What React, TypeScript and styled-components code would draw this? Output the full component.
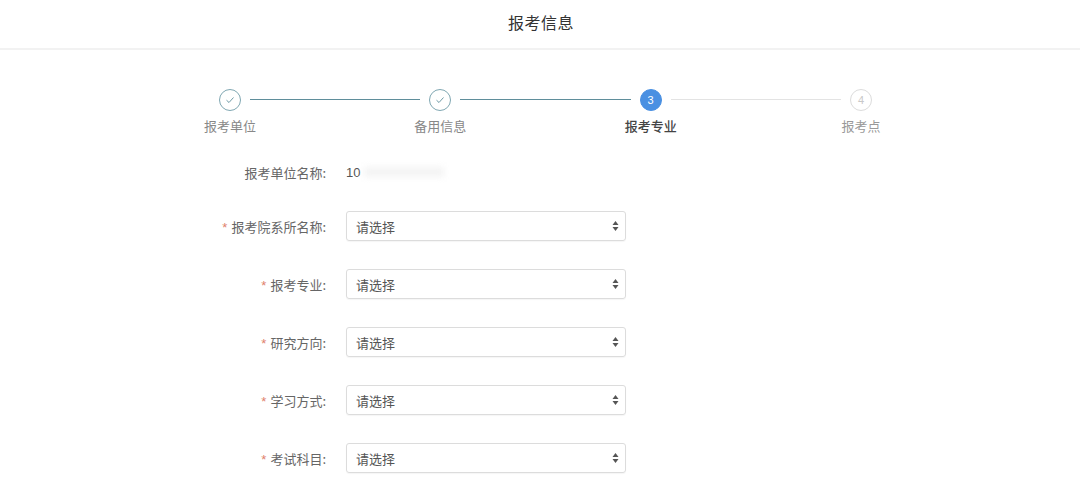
import React from "react";
import styled, { createGlobalStyle } from "styled-components";

const Global = createGlobalStyle`
  html, body { margin: 0; padding: 0; background: #ffffff; }
  body { font-family: "Noto Sans CJK SC", "Noto Sans", sans-serif; color: #333; }
`;

const Page = styled.div`
  width: 1080px;
  height: 487px;
  overflow: hidden;
  background: #fff;
`;

const Header = styled.header`
  height: 48px;
  border-bottom: 2px solid #f2f2f2;
  display: flex;
  align-items: center;
  justify-content: center;
`;

const Title = styled.h1`
  margin: 0 0 4px 2px;
  font-size: 16px;
  font-weight: 400;
  color: #333;
  letter-spacing: 0.5px;
`;

const Steps = styled.div`
  display: flex;
  align-items: flex-start;
  margin: 39px 0 0 219px;
  width: 653px;
`;

const StepItem = styled.div`
  width: 22px;
  display: flex;
  flex-direction: column;
  align-items: center;
`;

type State = "done" | "active" | "todo";

const Circle = styled.div<{ $state: State }>`
  width: 22px;
  height: 22px;
  box-sizing: border-box;
  border-radius: 50%;
  display: flex;
  align-items: center;
  justify-content: center;
  font-size: 11px;
  font-family: "Liberation Sans", sans-serif;
  border: 1px solid
    ${(p) => (p.$state === "done" ? "#7fa7b2" : p.$state === "active" ? "#4a90e2" : "#dcdcdc")};
  background: ${(p) => (p.$state === "active" ? "#4a90e2" : "#fff")};
  color: ${(p) => (p.$state === "active" ? "#fff" : "#c8c8c8")};
`;

const StepLabel = styled.div<{ $state: State }>`
  margin-top: 6px;
  white-space: nowrap;
  font-size: 13px;
  line-height: 18px;
  color: ${(p) => (p.$state === "active" ? "#444" : p.$state === "done" ? "#888" : "#999")};
  font-weight: ${(p) => (p.$state === "active" ? 500 : 400)};
`;

const Connector = styled.div<{ $done: boolean }>`
  flex: 1;
  height: 1px;
  margin: 10px 9px 0;
  background: ${(p) => (p.$done ? "#5f8e9b" : "#e3e3e3")};
`;

const Form = styled.div`
  margin-top: 22px;
  padding-left: 200px;
  display: flex;
  flex-direction: column;
  gap: 28px;
`;

const Row = styled.div<{ $tight?: boolean }>`
  display: flex;
  align-items: center;
  height: 30px;
  margin-bottom: ${(p) => (p.$tight ? "-4px" : "0")};
`;

const Label = styled.label`
  width: 126px;
  text-align: right;
  font-size: 13px;
  color: #666;
  white-space: nowrap;
  margin-right: 20px;
`;

const Star = styled.span`
  color: #e0806c;
  margin-right: 4px;
  font-family: "Liberation Sans", sans-serif;
`;

const Value = styled.span`
  font-size: 13px;
  color: #555;
  font-family: "Liberation Sans", sans-serif;
`;

const Blurred = styled.span`
  display: inline-block;
  width: 80px;
  height: 10px;
  margin-left: 4px;
  background: #f4f4f4;
  filter: blur(3px);
`;

const Select = styled.div`
  width: 280px;
  height: 30px;
  box-sizing: border-box;
  border: 1px solid #dcdcdc;
  border-radius: 3px;
  box-shadow: 0 1px 1px rgba(0, 0, 0, 0.04);
  display: flex;
  align-items: center;
  justify-content: space-between;
  padding: 0 6px 0 9px;
  font-size: 13px;
  color: #555;
`;

const Arrows = () => (
  <svg width="7" height="12" viewBox="0 0 7 12">
    <path d="M3.5 1 L6.5 5 L0.5 5 Z" fill="#555" />
    <path d="M3.5 11 L6.5 7 L0.5 7 Z" fill="#555" />
  </svg>
);

const Check = () => (
  <svg width="10" height="8" viewBox="0 0 10 8">
    <path d="M1.5 4.2 L4 6.5 L8.5 1.5" stroke="#6f9aa6" strokeWidth="1" fill="none" />
  </svg>
);

const steps: { label: string; state: State; n: number }[] = [
  { label: "报考单位", state: "done", n: 1 },
  { label: "备用信息", state: "done", n: 2 },
  { label: "报考专业", state: "active", n: 3 },
  { label: "报考点", state: "todo", n: 4 },
];

const fields = ["报考院系所名称:", "报考专业:", "研究方向:", "学习方式:", "考试科目:"];

export default function App() {
  return (
    <Page>
      <Global />
      <Header>
        <Title>报考信息</Title>
      </Header>
      <Steps>
        {steps.map((s, i) => (
          <React.Fragment key={s.label}>
            {i > 0 && <Connector $done={steps[i].state !== "todo"} />}
            <StepItem>
              <Circle $state={s.state}>{s.state === "done" ? <Check /> : s.n}</Circle>
              <StepLabel $state={s.state}>{s.label}</StepLabel>
            </StepItem>
          </React.Fragment>
        ))}
      </Steps>
      <Form>
        <Row $tight>
          <Label>报考单位名称:</Label>
          <Value>10</Value>
          <Blurred />
        </Row>
        {fields.map((f) => (
          <Row key={f}>
            <Label>
              <Star>*</Star>
              {f}
            </Label>
            <Select>
              <span>请选择</span>
              <Arrows />
            </Select>
          </Row>
        ))}
      </Form>
    </Page>
  );
}
